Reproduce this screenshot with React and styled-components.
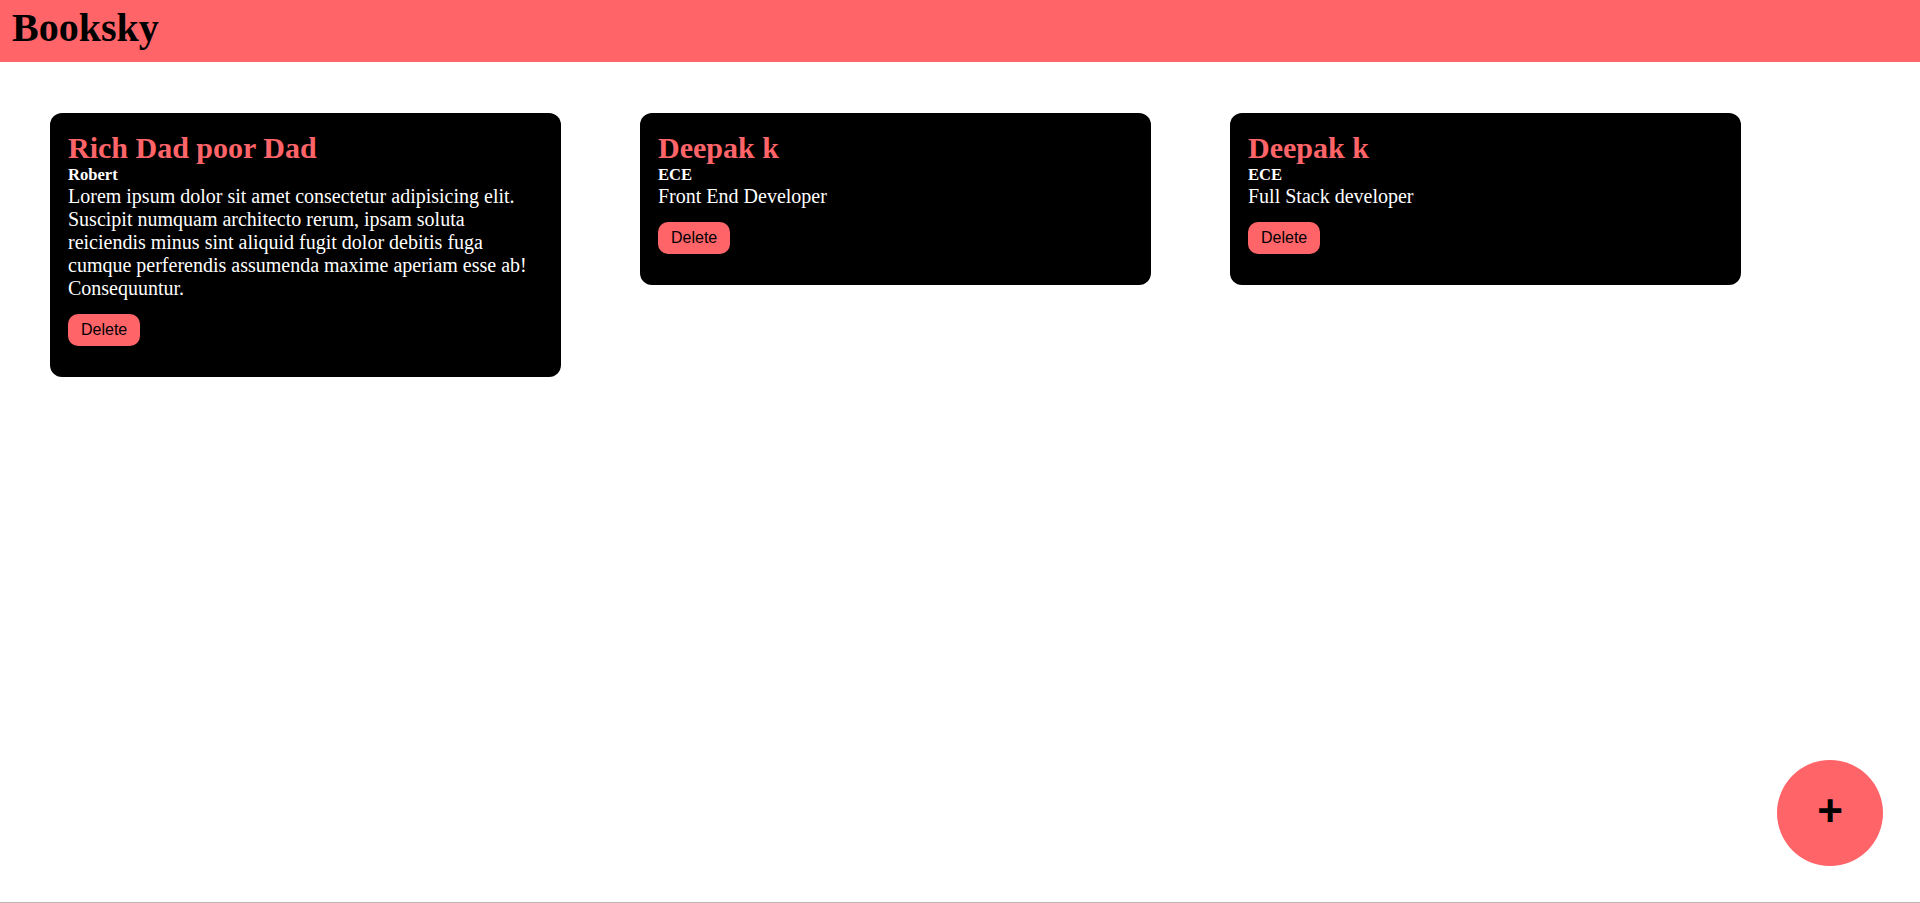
import React from 'react';
import styled, { createGlobalStyle } from 'styled-components';

const GlobalStyle = createGlobalStyle`
	body{margin: 0; font-family: "Liberation Serif", "Times New Roman", serif; font-size: 20px; background: #ffffff}
	*{box-sizing: border-box}
`;

const accent = '#ff6469';

const Page = styled.div`
	min-height: 100vh;
	border-bottom: 1px solid #bdb4b4;
`;

const Header = styled.header`
	height: 62px; padding: 4px 12px 0; background: ${accent};

	h1{margin: 0; font-size: 40px; font-weight: 700; color: #000000}
`;

const CardList = styled.main`
	display: flex; align-items: flex-start; gap: 79px;
	padding: 51px 50px;
`;

const Card = styled.div`
	width: 511px; padding: 18px 18px; background: #000000; color: #ffffff; border-radius: 12px;

	h2{margin: 0; font-size: 30px; font-weight: 700; color: ${accent}}
	h5{margin: 0; font-size: 16.6px; font-weight: 700}
	p{margin: 0; font-size: 20px; line-height: 23px}
`;

const DeleteBtn = styled.button`
	display: block; margin: 14px 0 13px; padding: 7px 13px; border: none; border-radius: 10px;
	background: ${accent}; color: #000000; font-family: "Liberation Sans", Arial, sans-serif; font-size: 16px; line-height: 18px;
	cursor: pointer;
`;

const AddBtn = styled.button`
	position: fixed; right: 37px; bottom: 37px;
	width: 106px; height: 106px; border: none; border-radius: 50%; padding: 0 0 4px;
	display: flex; align-items: center; justify-content: center;
	background: ${accent}; color: #000000; font-family: "Liberation Sans", Arial, sans-serif; font-size: 44px; font-weight: 700; line-height: 1;
	cursor: pointer;
`;

const books = [
	{ id: 1, title: 'Rich Dad poor Dad', author: 'Robert', text: 'Lorem ipsum dolor sit amet consectetur adipisicing elit. Suscipit numquam architecto rerum, ipsam soluta reiciendis minus sint aliquid fugit dolor debitis fuga cumque perferendis assumenda maxime aperiam esse ab! Consequuntur.' },
	{ id: 2, title: 'Deepak k', author: 'ECE', text: 'Front End Developer' },
	{ id: 3, title: 'Deepak k', author: 'ECE', text: 'Full Stack developer' },
];

function App() {
	return (
		<Page>
			<GlobalStyle />
			<Header>
				<h1>Booksky</h1>
			</Header>
			<CardList>
				{books.map((book) => (
					<Card key={book.id}>
						<h2>{book.title}</h2>
						<h5>{book.author}</h5>
						<p>{book.text}</p>
						<DeleteBtn>Delete</DeleteBtn>
					</Card>
				))}
			</CardList>
			<AddBtn>+</AddBtn>
		</Page>
	)
}

export default App;
